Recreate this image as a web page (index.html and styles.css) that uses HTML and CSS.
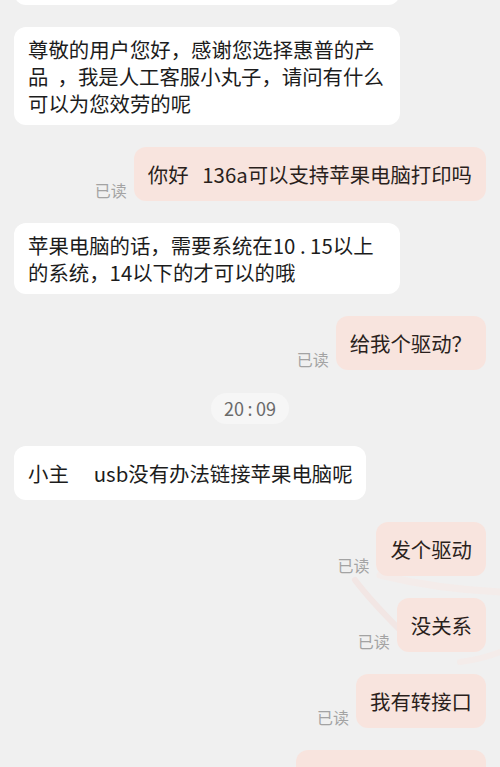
FILE: index.html
```html
<!DOCTYPE html>
<html lang="zh-CN">
<head>
<meta charset="utf-8">
<title>聊天</title>
<link rel="stylesheet" href="styles.css">
</head>
<body>
<div class="screen">
  <svg class="deco" width="160" height="140" viewBox="0 0 160 140" aria-hidden="true">
    <path d="M15 50 C 30 70, 45 85, 60 100" fill="none" stroke="#f2e6e4" stroke-width="6" stroke-linecap="round"/>
    <path d="M40 45 C 80 55, 120 60, 160 62" fill="none" stroke="#f4ecea" stroke-width="7" stroke-linecap="round"/>
    <path d="M120 132 C 135 130, 150 126, 160 122" fill="none" stroke="#f4ecea" stroke-width="6" stroke-linecap="round"/>
  </svg>
  <div class="chat">
    <div class="row left"><div class="bubble white cut"></div></div>

    <div class="row left">
      <div class="bubble white"><span class="msg">尊敬的用户您好，感谢您选择惠普的产品  ，我是人工客服小丸子，请问有什么可以为您效劳的呢</span></div>
    </div>

    <div class="row right">
      <span class="read">已读</span>
      <div class="bubble pink"><span class="msg">你好   136a可以支持苹果电脑打印吗</span></div>
    </div>

    <div class="row left">
      <div class="bubble white"><span class="msg">苹果电脑的话，需要系统在10&nbsp;.&nbsp;15以上的系统，14以下的才可以的哦</span></div>
    </div>

    <div class="row right">
      <span class="read">已读</span>
      <div class="bubble pink"><span class="msg">给我个驱动？</span></div>
    </div>

    <div class="time"><span class="pill">20&thinsp;:&thinsp;09</span></div>

    <div class="row left">
      <div class="bubble white"><span class="msg">小主 　usb没有办法链接苹果电脑呢</span></div>
    </div>

    <div class="row right">
      <span class="read">已读</span>
      <div class="bubble pink"><span class="msg">发个驱动</span></div>
    </div>

    <div class="row right">
      <span class="read">已读</span>
      <div class="bubble pink"><span class="msg">没关系</span></div>
    </div>

    <div class="row right">
      <span class="read">已读</span>
      <div class="bubble pink"><span class="msg">我有转接口</span></div>
    </div>

    <div class="row right">
      <div class="bubble pink last"><span class="msg">&nbsp;</span></div>
    </div>
  </div>
</div>
</body>
</html>
```

FILE: styles.css
```css
* { box-sizing: border-box; }
html, body {
  margin: 0;
  padding: 0;
  background: #f0f0f0;
}
body {
  font-family: "Noto Sans CJK SC", "Noto Sans", sans-serif;
  overflow: hidden;
}
.screen {
  position: relative;
  width: 500px;
  height: 767px;
  overflow: hidden;
}
.deco {
  position: absolute;
  left: 340px;
  top: 530px;
}
.chat {
  position: relative;
  display: flex;
  flex-direction: column;
  gap: 22px;
  padding: 0 14px;
  margin-top: -49px;
}
.row {
  display: flex;
  align-items: flex-end;
}
.row.left { justify-content: flex-start; }
.row.right { justify-content: flex-end; gap: 7px; }
.bubble {
  max-width: 386px;
  min-height: 54px;
  padding: 8.5px 13px 8.5px 14px;
  border-radius: 12px;
  font-size: 20.4px;
  line-height: 27px;
  color: #1c1c1c;
  display: flex;
  align-items: center;
}
.msg {
  display: block;
  white-space: pre-wrap;
}
.bubble.white { background: #ffffff; }
.bubble.pink { background: #f8e4de; color: #2a1f1c; padding-right: 14px; }
.bubble.cut { width: 386px; height: 45px; }
.bubble.last { width: 190px; }
.read {
  font-size: 16px;
  line-height: 20px;
  color: #a3a3a3;
  padding-bottom: 1px;
}
.time {
  display: flex;
  justify-content: center;
  margin-top: 1px;
}
.pill {
  display: inline-block;
  height: 31px;
  line-height: 31px;
  padding: 0 13px;
  border-radius: 16px;
  background: #f6f6f6;
  color: #6a6a6a;
  font-size: 18px;
}
```
